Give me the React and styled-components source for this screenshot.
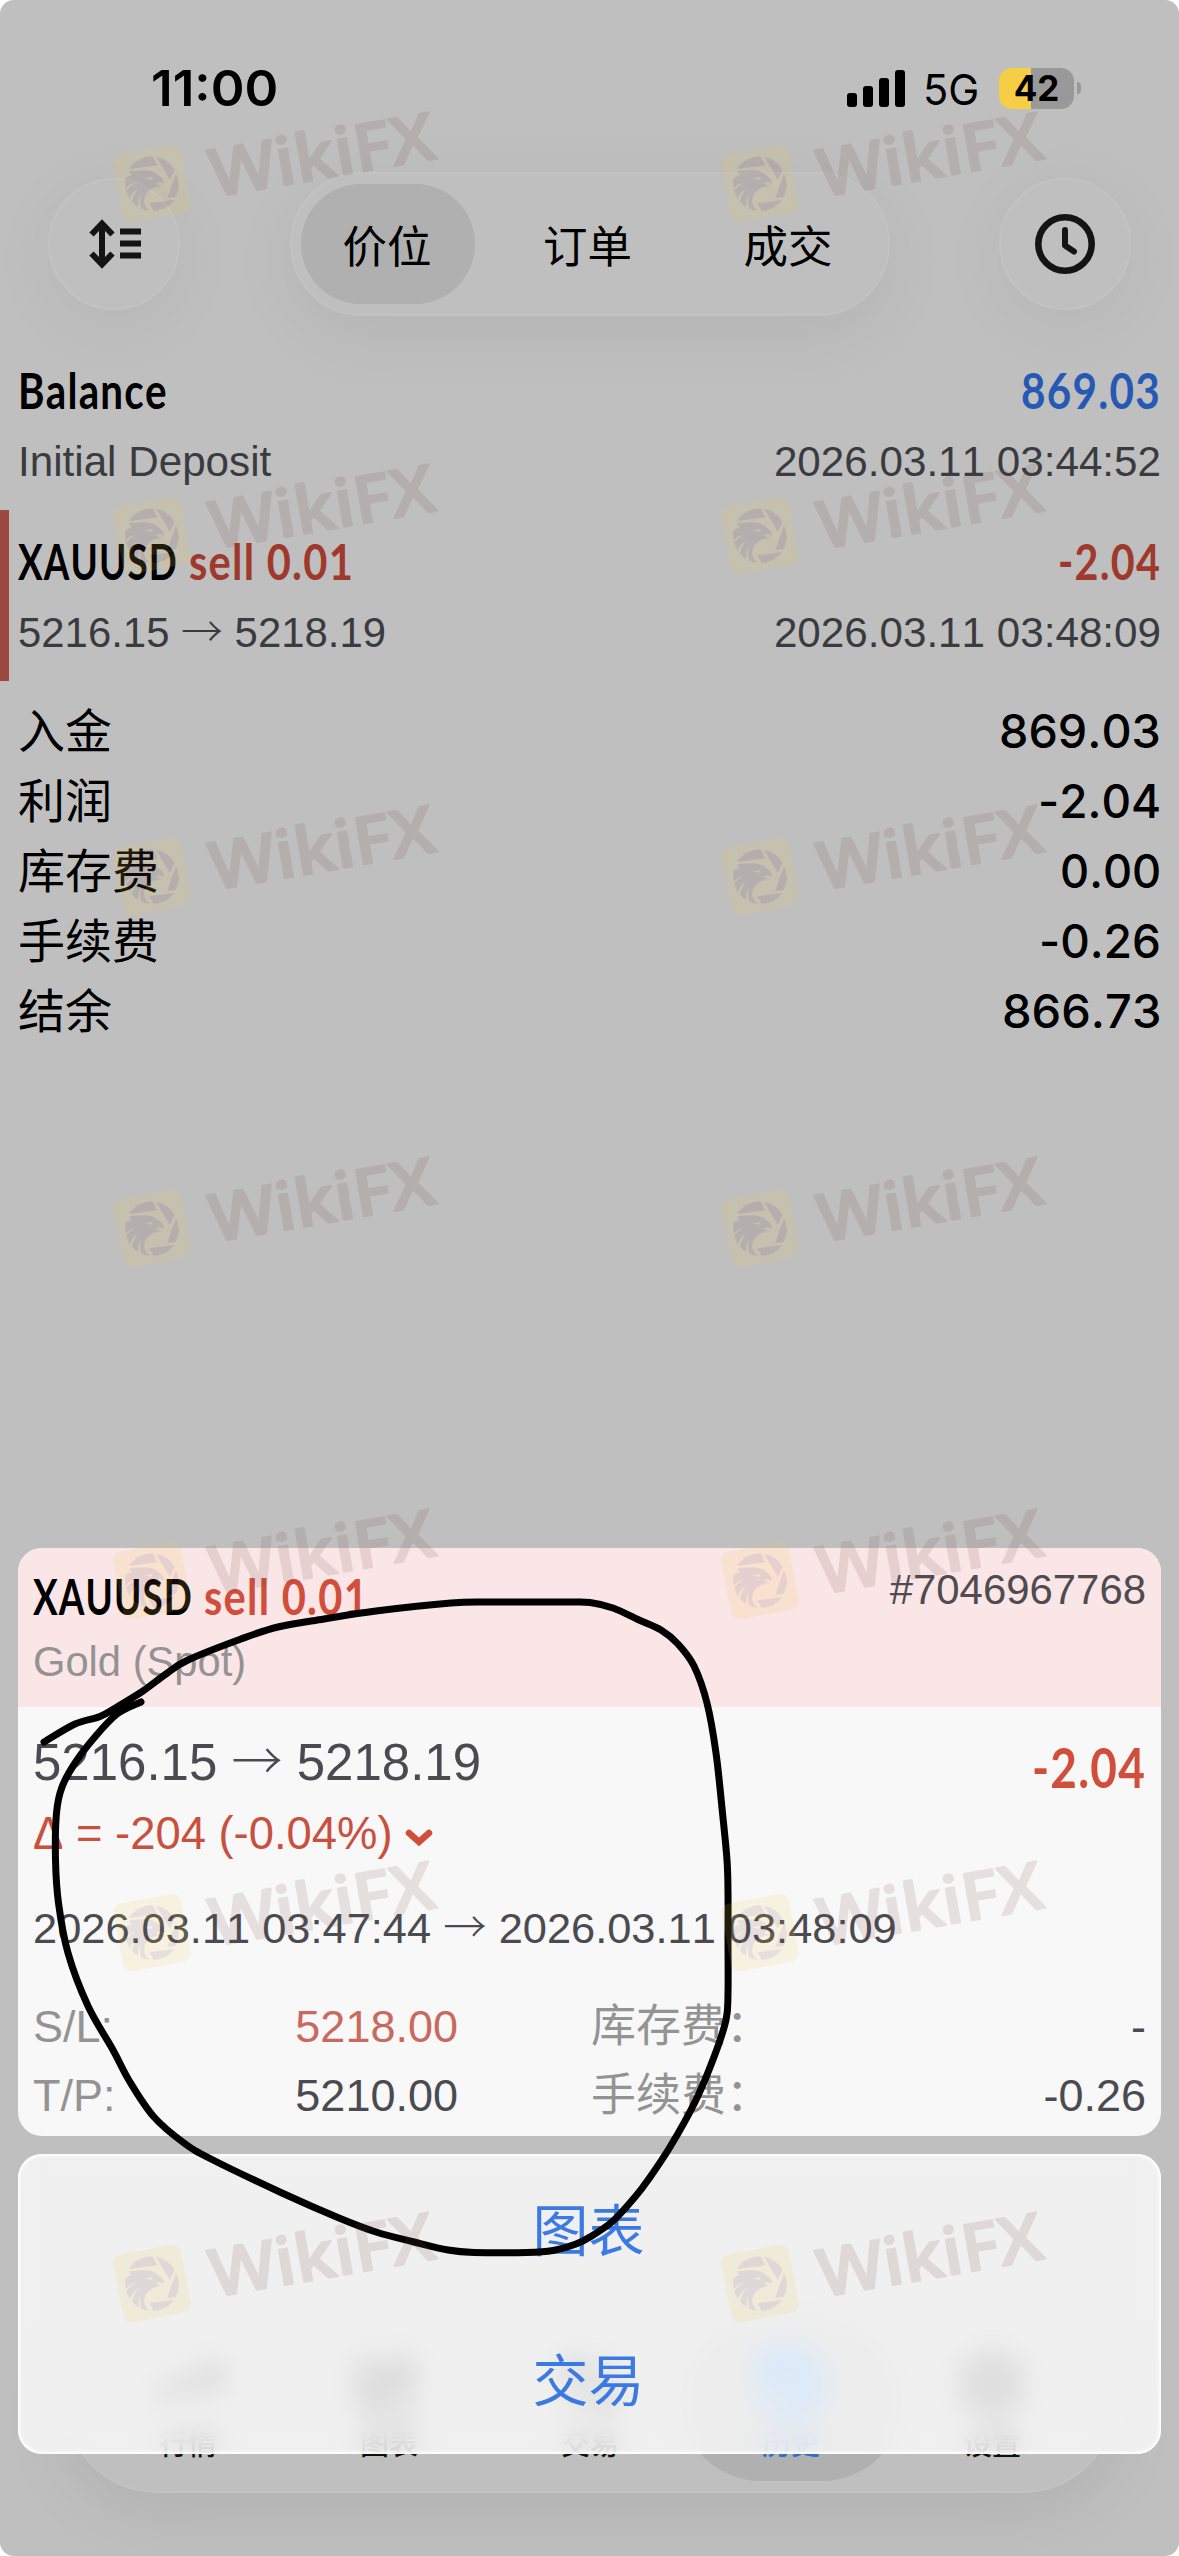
import { useLayoutEffect, useRef, useState } from "react";
import styled, { createGlobalStyle } from "styled-components";
import {
  ChartCandlestick,
  History,
  Settings,
  TrendingUp,
  ArrowUpDown,
} from "lucide-react";

const GlobalStyle = createGlobalStyle`
  * {
    box-sizing: border-box;
  }
  body {
    margin: 0;
    background: #fff;
    font-family: "Liberation Sans", "Noto Sans CJK SC", sans-serif;
    font-kerning: none;
  }
`;

const Screen = styled.div`
  position: relative;
  display: flex;
  flex-direction: column;
  width: 1179px;
  height: 2556px;
  overflow: hidden;
  border-radius: 14px;
  background: #bfbfbf;
  color: #000;
`;

/* status bar */

const StatusBar = styled.header`
  display: flex;
  align-items: center;
  height: 172px;
  padding: 4px 98px 0 151px;
`;

const Clock = styled.div`
  flex: 1;
  font-family: Inter, sans-serif;
  font-size: 50px;
  font-weight: 600;
  line-height: 60px;
`;

const Signal = styled.div`
  display: flex;
  align-items: flex-end;
  gap: 6px;
  height: 37px;
`;

const Bar = styled.i`
  width: 10px;
  height: ${(p) => p.$h}px;
  border-radius: 3px;
  background: #000;
`;

const Network = styled.div`
  margin: 2px 20px 0 18px;
  font-family: Inter, sans-serif;
  font-size: 43px;
  line-height: 50px;
`;

const Battery = styled.div`
  display: flex;
  align-items: center;
  justify-content: center;
  width: 75px;
  height: 41px;
  border-radius: 13px;
  background: linear-gradient(90deg, #f5ce46 32px, #999 32px);
  font-family: Inter, sans-serif;
  font-size: 35px;
  font-weight: 700;
  line-height: 41px;
`;

const BatteryTip = styled.i`
  width: 4px;
  height: 12px;
  margin-left: 3px;
  border-radius: 0 6px 6px 0;
  background: #999;
`;

/* top navigation */

const Nav = styled.nav`
  display: grid;
  grid-template-columns: 132px 600px 132px;
  column-gap: 109.5px;
  align-items: center;
  height: 144px;
  padding-left: 48px;
`;

const RoundButton = styled.button`
  display: flex;
  align-items: center;
  justify-content: center;
  width: 132px;
  height: 132px;
  padding: 0;
  border: 2px solid #c3c3c3;
  border-radius: 50%;
  background: #bfbfbf;
  box-shadow: 0 14px 70px rgba(0, 0, 0, 0.05);
`;

const Segments = styled.div`
  display: flex;
  align-items: center;
  gap: 26.5px;
  height: 144px;
  padding-left: 9px;
  border: 2px solid #c2c2c2;
  border-radius: 72px;
  background: #bfbfbf;
  box-shadow: 0 18px 70px rgba(0, 0, 0, 0.06);
`;

const Segment = styled.button`
  width: 174px;
  height: 120px;
  padding: 0 1px 2px 0;
  border: 0;
  border-radius: 60px;
  background: ${(p) => (p.$active ? "#b0b0b0" : "transparent")};
  color: #000;
  font-family: "Noto Sans CJK SC", sans-serif;
  font-size: 44.5px;
`;

/* history list */

const Deal = styled.section`
  height: 171px;
  margin-top: ${(p) => p.$top || 0}px;
  padding: 21px 18px 0 ${(p) => (p.$marked ? 9 : 18)}px;
  border-left: ${(p) => (p.$marked ? "9px solid #9c4a3f" : "0")};
`;

const Row = styled.div`
  display: flex;
  justify-content: space-between;
  height: 60px;
  margin-top: ${(p) => p.$top || 0}px;
  line-height: 60px;
`;

const Heading = styled.div`
  display: flex;
  gap: 11px;
  font-family: Lato, sans-serif;
  font-size: ${(p) => p.$size || 50}px;
  font-weight: 700;
  letter-spacing: 1.5px;
  line-height: 60px;
  color: ${(p) => p.$color || "#000"};
`;

const Meta = styled.div`
  font-size: ${(p) => p.$size || 42.2}px;
  line-height: 60px;
  white-space: nowrap;
  color: ${(p) => p.$color || "#3a3b3f"};
`;

const ArrowGlyph = styled.span`
  font-family: "Noto Sans CJK SC", sans-serif;
  font-weight: 300;
  line-height: 0;
`;

const Totals = styled.section`
  padding: 15px 18px 0;
`;

const TotalRow = styled.div`
  display: flex;
  justify-content: space-between;
  height: 70px;
  font-family: Inter, "Noto Sans CJK SC", sans-serif;
  font-size: 47px;
  line-height: 70px;
`;

const TotalValue = styled.span`
  font-weight: 500;
  font-feature-settings: "calt" 0;
`;

/* tab bar */

const TabBar = styled.footer`
  display: grid;
  grid-template-columns: repeat(5, 201px);
  justify-content: center;
  height: 186px;
  margin: auto 63px 63px 64px;
  border: 2px solid #c2c2c2;
  border-radius: 93px;
  background: #bfbfbf;
  box-shadow: 0 16px 70px rgba(0, 0, 0, 0.08);
`;

const Tab = styled.div`
  display: flex;
  flex-direction: column;
  align-items: center;
  justify-content: flex-end;
  gap: 4px;
  height: 162px;
  margin: 10px -11px 0;
  padding-bottom: 16px;
  border-radius: 81px;
  background: ${(p) => (p.$active ? "#b0b0b0" : "transparent")};
  color: ${(p) => (p.$active ? "#2a6fca" : "#0c110d")};
  font-size: 29px;
  line-height: 40px;
  font-weight: 500;

  svg {
    color: ${(p) => (p.$active ? "#3f9dff" : "#222")};
  }
`;

/* bottom overlay */

const Overlay = styled.div`
  position: absolute;
  left: 18px;
  right: 18px;
  bottom: 102px;
  display: flex;
  flex-direction: column;
  gap: 18px;
`;

const Card = styled.article`
  overflow: hidden;
  height: 588px;
  border-radius: 24px;
  background: #f8f8f8;
`;

const CardHead = styled.div`
  display: flex;
  justify-content: space-between;
  height: 159px;
  padding: 12px 15px 0;
  background: #fae6e6;
`;

const CardTitle = styled.div`
  padding-top: 6px;
`;

const CardBody = styled.div`
  padding: 26px 15px 0;
`;

const Delta = styled.div`
  display: flex;
  align-items: center;
  gap: 12px;

  svg {
    margin-top: 5px;
  }
`;

const Details = styled.div`
  display: grid;
  grid-template-columns: 425px 1fr;
  column-gap: 133px;
  margin-top: 34px;
`;

const Detail = styled.div`
  display: flex;
  justify-content: space-between;
  height: 69px;
  font-size: 45px;
  line-height: 69px;
  color: ${(p) => p.$color || "#4b4a50"};
`;

const Label = styled.span`
  color: #949393;
  font-kerning: normal;
`;

const Sheet = styled.div`
  height: 300px;
  border-radius: 24px;
  background: rgba(255, 255, 255, 0.77);
  backdrop-filter: blur(14px);
  box-shadow: inset 0 0 3px 2px #fff;
`;

const SheetButton = styled.button`
  display: block;
  width: 100%;
  height: 150px;
  padding: 0 2px 5px 0;
  border: 0;
  background: none;
  color: #3b7ae2;
  font-family: "Noto Sans CJK SC", sans-serif;
  font-size: 56px;
`;

/* drawing layers */

const Layer = styled.svg`
  position: absolute;
  inset: 0;
  pointer-events: none;
`;

const FitBox = styled.span`
  display: inline-block;
  width: ${(p) => p.$width}px;
  white-space: nowrap;
`;

const FitInner = styled.span`
  display: inline-block;
  transform-origin: left center;
`;

// squeezes a line of text into the given width
function Fit({ width, children }) {
  const ref = useRef(null);
  const [scale, setScale] = useState(1);

  useLayoutEffect(() => {
    const measure = () => {
      if (ref.current) setScale(width / ref.current.offsetWidth);
    };
    measure();
    document.fonts?.ready.then(measure);
  }, [width]);

  return (
    <FitBox $width={width}>
      <FitInner ref={ref} style={{ transform: `scaleX(${scale})` }}>
        {children}
      </FitInner>
    </FitBox>
  );
}

const RED_DIM = "#9f392c";
const RED = "#d14e3b";

const totals = [
  ["入金", "869.03", 162],
  ["利润", "-2.04", 123],
  ["库存费", "0.00", 101],
  ["手续费", "-0.26", 122],
  ["结余", "866.73", 159],
];

const tabs = [
  { label: "行情", icon: TrendingUp },
  { label: "图表", icon: ChartCandlestick },
  { label: "交易", icon: ArrowUpDown },
  { label: "历史", icon: History, active: true },
  { label: "设置", icon: Settings },
];

const STROKE = [
  [44, 1742], [75, 1724], [100, 1716.5], [117, 1707], [143, 1691],
  [166, 1674], [188, 1660], [241, 1639], [278, 1627], [324, 1619],
  [376, 1611], [451, 1603], [489, 1602], [530, 1602], [570, 1602],
  [590, 1602.5], [613, 1608], [639, 1620], [661, 1630], [678, 1644],
  [694, 1666], [707, 1703], [716, 1753], [722.5, 1813], [727, 1860],
  [728, 1893], [728, 1940], [728, 1993], [726, 2020], [714, 2057],
  [695, 2102], [670, 2147], [648, 2180], [635, 2197], [613, 2221],
  [590, 2237], [576, 2244], [553, 2250.5], [527, 2252.5], [474, 2252.5],
  [448, 2250], [414, 2242], [376, 2232], [339, 2218], [282, 2193],
  [211, 2159], [184, 2143], [154, 2117], [130, 2082], [113, 2050],
  [88, 2006], [68, 1953], [58.5, 1903], [55.5, 1860], [56.5, 1813],
  [62, 1787], [75, 1763], [94, 1738], [117, 1714], [141, 1702],
];

function smooth(pts) {
  let d = `M${pts[0][0]} ${pts[0][1]}`;
  for (let i = 0; i < pts.length - 1; i++) {
    const a = pts[i - 1] || pts[i];
    const b = pts[i];
    const c = pts[i + 1];
    const e = pts[i + 2] || c;
    d += ` C${b[0] + (c[0] - a[0]) / 6} ${b[1] + (c[1] - a[1]) / 6}`;
    d += ` ${c[0] - (e[0] - b[0]) / 6} ${c[1] - (e[1] - b[1]) / 6}`;
    d += ` ${c[0]} ${c[1]}`;
  }
  return d;
}

function Scribble() {
  return (
    <Layer width="1179" height="2556" fill="none">
      <path
        d={smooth(STROKE)}
        stroke="#000"
        strokeWidth="7"
        strokeLinecap="round"
        strokeLinejoin="round"
      />
    </Layer>
  );
}

function Watermark({ x, y }) {
  return (
    <g transform={`translate(${x} ${y}) scale(0.3333)`} opacity="0.14">
      <rect
        x="17"
        y="16"
        width="206"
        height="206"
        rx="26"
        fill="#f0c646"
        transform="rotate(-11 120 119)"
      />
      <g fill="#734b46" transform="translate(-15 -412)">
        <path d="M66 487 A82 82 0 0 1 137 449 L151 476 Z" />
        <path d="M147 450 A82 82 0 0 1 203 489 L189 519 Z" />
        <path d="M207 499 A82 82 0 0 1 206 571 L181 574 Z" />
        <path d="M201 580 A82 82 0 0 1 140 613 L127 590 Z" />
        <path d="M66 494 L104 491 Q138 488 156 507 Q170 514 171 532 Q160 523 148 529 Q150 536 167 538 Q142 539 126 552 Q108 568 112 590 Q116 604 127 612 A82 82 0 0 1 56 515 Q60 508 74 507 Z" />
        <path
          d="M112 515 L137 511 L133 520 Z M56 546 Q70 530 86 528 Q68 538 57 552 Z M68 580 Q74 556 94 546 Q80 562 74 586 Z M94 602 Q92 580 100 566 Q98 586 102 606 Z"
          fill="#f0c646"
        />
        <text
          x="320"
          y="572"
          transform="rotate(-9.8 320 572)"
          fontFamily="Open Sans, sans-serif"
          fontWeight="600"
          fontSize="198"
          textLength="682"
          lengthAdjust="spacingAndGlyphs"
          stroke="#734b46"
          strokeWidth="6"
          strokeLinejoin="round"
        >
          WikiFX
        </text>
      </g>
    </g>
  );
}

function Watermarks() {
  const rows = [144, 496, 837, 1189, 1541, 1893, 2244];
  return (
    <Layer width="1179" height="2556">
      {rows.map((y) => (
        <g key={y}>
          <Watermark x={112} y={y} />
          <Watermark x={720} y={y} />
        </g>
      ))}
    </Layer>
  );
}

function Arrow() {
  return <ArrowGlyph>→</ArrowGlyph>;
}

export default function App() {
  return (
    <>
      <GlobalStyle />
      <Screen>
        <StatusBar>
          <Clock>
            <Fit width={127}>11:00</Fit>
          </Clock>
          <Signal>
            <Bar $h={14} />
            <Bar $h={21} />
            <Bar $h={29} />
            <Bar $h={37} />
          </Signal>
          <Network>
            <Fit width={56}>5G</Fit>
          </Network>
          <Battery>42</Battery>
          <BatteryTip />
        </StatusBar>

        <Nav>
          <RoundButton>
            <svg width="54" height="50" viewBox="0 0 54 50" fill="none">
              <path
                d="M15 5 V45 M4.5 15.5 L15 4.5 L25.5 15.5 M4.5 34.5 L15 45.5 L25.5 34.5"
                stroke="#141414"
                strokeWidth="6"
              />
              <path
                d="M33 12.5 H54 M33 24.5 H54 M33 36.5 H54"
                stroke="#141414"
                strokeWidth="6"
              />
            </svg>
          </RoundButton>
          <Segments>
            <Segment $active>价位</Segment>
            <Segment>订单</Segment>
            <Segment>成交</Segment>
          </Segments>
          <RoundButton>
            <svg width="60" height="60" viewBox="0 0 60 60" fill="none">
              <circle cx="30" cy="30" r="26.7" stroke="#141414" strokeWidth="6.6" />
              <path
                d="M30 16 V31.5 L39 37.5"
                stroke="#141414"
                strokeWidth="6"
                strokeLinecap="round"
                strokeLinejoin="round"
              />
            </svg>
          </RoundButton>
        </Nav>

        <Deal $top={23}>
          <Row>
            <Heading>
              <Fit width={150}>Balance</Fit>
            </Heading>
            <Heading $color="#2659b4">
              <Fit width={140}>869.03</Fit>
            </Heading>
          </Row>
          <Row $top={12}>
            <Meta>Initial Deposit</Meta>
            <Meta>2026.03.11 03:44:52</Meta>
          </Row>
        </Deal>

        <Deal $marked>
          <Row>
            <Heading>
              <Fit width={160}>XAUUSD</Fit>
              <Heading $color={RED_DIM}>
                <Fit width={165}>sell 0.01</Fit>
              </Heading>
            </Heading>
            <Heading $color={RED_DIM}>
              <Fit width={103}>-2.04</Fit>
            </Heading>
          </Row>
          <Row $top={12}>
            <Meta $size={41.9}>
              5216.15 <Arrow /> 5218.19
            </Meta>
            <Meta>2026.03.11 03:48:09</Meta>
          </Row>
        </Deal>

        <Totals>
          {totals.map(([name, value, width]) => (
            <TotalRow key={name}>
              <span>{name}</span>
              <TotalValue>
                <Fit width={width}>{value}</Fit>
              </TotalValue>
            </TotalRow>
          ))}
        </Totals>

        <TabBar>
          {tabs.map(({ label, icon: Icon, active }) => (
            <Tab key={label} $active={active}>
              <Icon size={74} strokeWidth={active ? 4 : 2.2} />
              {label}
            </Tab>
          ))}
        </TabBar>

        <Overlay>
          <Card>
            <CardHead>
              <CardTitle>
                <Heading>
                  <Fit width={160}>XAUUSD</Fit>
                  <Heading $color={RED}>
                    <Fit width={165}>sell 0.01</Fit>
                  </Heading>
                </Heading>
                <Row $top={6}>
                  <Meta $size={41.7} $color="#949293">
                    Gold (Spot)
                  </Meta>
                </Row>
              </CardTitle>
              <Meta $size={41.9} $color="#4f4b50">
                #7046967768
              </Meta>
            </CardHead>
            <CardBody>
              <Row>
                <Meta $size={51} $color="#4b4a50">
                  5216.15 <Arrow /> 5218.19
                </Meta>
                <Row $top={4}>
                  <Heading $size={56} $color={RED}>
                    <Fit width={114}>-2.04</Fit>
                  </Heading>
                </Row>
              </Row>
              <Row $top={11}>
                <Delta>
                  <Meta $size={45.4} $color="#c9503f">
                    Δ = -204 (-0.04%)
                  </Meta>
                  <svg width="28" height="22" viewBox="0 0 28 22" fill="none">
                    <path
                      d="M4 7 L14 16 L24 7"
                      stroke={RED}
                      strokeWidth="6.5"
                      strokeLinecap="round"
                    />
                  </svg>
                </Delta>
              </Row>
              <Row $top={34}>
                <Meta $size={43.4} $color="#4b4a50">
                  2026.03.11 03:47:44 <Arrow /> 2026.03.11 03:48:09
                </Meta>
              </Row>
              <Details>
                <Detail $color="#c86a5d">
                  <Label>S/L:</Label>
                  <span>5218.00</span>
                </Detail>
                <Detail>
                  <Label>库存费：</Label>
                  <span>-</span>
                </Detail>
                <Detail>
                  <Label>T/P:</Label>
                  <span>5210.00</span>
                </Detail>
                <Detail>
                  <Label>手续费：</Label>
                  <span>-0.26</span>
                </Detail>
              </Details>
            </CardBody>
          </Card>
          <Sheet>
            <SheetButton>图表</SheetButton>
            <SheetButton>交易</SheetButton>
          </Sheet>
        </Overlay>

        <Scribble />
        <Watermarks />
      </Screen>
    </>
  );
}
